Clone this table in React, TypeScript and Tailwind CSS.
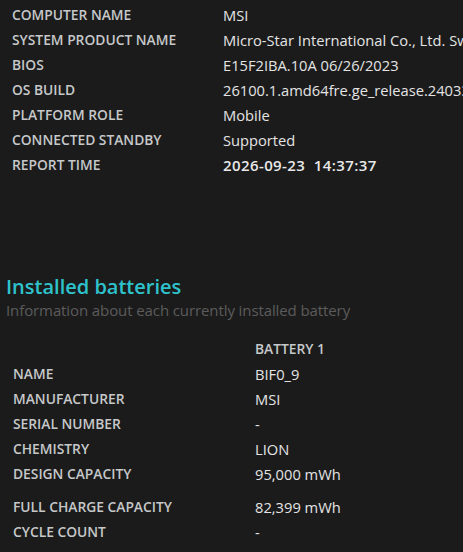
import React from 'react';

const systemInfo = [
  { label: 'COMPUTER NAME', value: 'MSI' },
  { label: 'SYSTEM PRODUCT NAME', value: 'Micro-Star International Co., Ltd. Sword 15 A12VF' },
  { label: 'BIOS', value: 'E15F2IBA.10A 06/26/2023' },
  { label: 'OS BUILD', value: '26100.1.amd64fre.ge_release.240331-1435' },
  { label: 'PLATFORM ROLE', value: 'Mobile' },
  { label: 'CONNECTED STANDBY', value: 'Supported' },
  { label: 'REPORT TIME', value: '2026-09-23\u00a0\u00a014:37:37', strong: true },
];

const batteryInfo = [
  { label: 'NAME', value: 'BIF0_9' },
  { label: 'MANUFACTURER', value: 'MSI' },
  { label: 'SERIAL NUMBER', value: '-' },
  { label: 'CHEMISTRY', value: 'LION' },
  { label: 'DESIGN CAPACITY', value: '95,000 mWh' },
  { label: 'FULL CHARGE CAPACITY', value: '82,399 mWh', spaced: true },
  { label: 'CYCLE COUNT', value: '-' },
];

const font = { fontFamily: '"Open Sans", "Noto Sans", sans-serif' };

const App = () => {
  return (
    <div className="w-[463px] h-[552px] overflow-hidden bg-[#1b1b1b] whitespace-nowrap" style={font}>
      {/* system summary */}
      <div className="pt-[3px] pl-[12px]">
        {systemInfo.map((row) => (
          <div key={row.label} className="flex h-[25px] items-center">
            <div className="w-[211px] shrink-0 text-[13.8px] font-semibold text-[#c6c8ca]">{row.label}</div>
            <div
              className={
                row.strong
                  ? 'text-[15px] font-semibold tracking-[0.4px] text-[#e8e8e8]'
                  : 'text-[14.7px] text-[#e4e4e4]'
              }
            >
              {row.value}
            </div>
          </div>
        ))}
      </div>

      {/* installed batteries */}
      <div className="mt-[96px] pl-[6px]">
        <h2 className="text-[20px] leading-[26px] font-semibold text-[#2ec3cc]">Installed batteries</h2>
        <p className="text-[15px] leading-[20px] tracking-[-0.1px] text-[#5c5c5c]">Information about each currently installed battery</p>
      </div>

      <div className="mt-[17px] pl-[13px]">
        <div className="flex h-[25px] items-center">
          <div className="w-[242px] shrink-0" />
          <div className="text-[13.8px] font-semibold text-[#c6c8ca]">BATTERY 1</div>
        </div>
        {batteryInfo.map((row) => (
          <div key={row.label} className={`flex h-[25px] items-center ${row.spaced ? 'mt-[8px]' : ''}`}>
            <div className="w-[242px] shrink-0 text-[13.8px] font-semibold text-[#c6c8ca]">{row.label}</div>
            <div className="text-[14.7px] text-[#e4e4e4]">{row.value}</div>
          </div>
        ))}
      </div>
    </div>
  );
};

export default App;
